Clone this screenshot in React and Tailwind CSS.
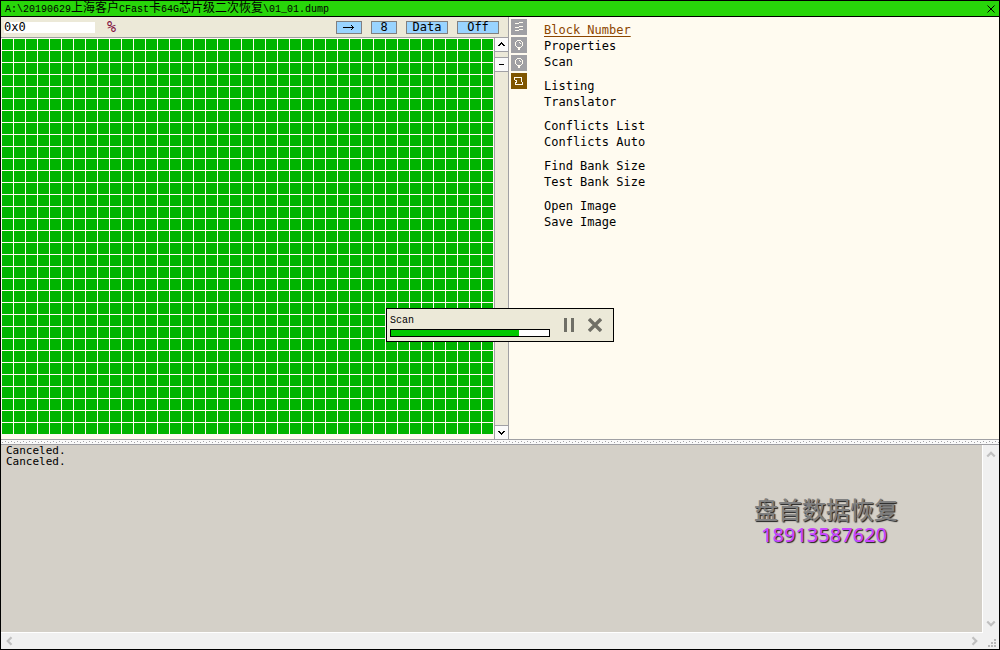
import React from 'react';

const COLS = 41;
const ROWS = 33;
const cells = Array.from({ length: COLS * ROWS }, (_, i) => i);

const menuGroups = [
    ['Block Number', 'Properties', 'Scan'],
    ['Listing', 'Translator'],
    ['Conflicts List', 'Conflicts Auto'],
    ['Find Bank Size', 'Test Bank Size'],
    ['Open Image', 'Save Image'],
];

const log = ['Canceled.', 'Canceled.'];

const Pixel = ({ d, size = 16, width = 1, className }) => (
    <svg width={size} height={size} viewBox={`0 0 ${size} ${size}`} fill="none" stroke="currentColor"
        strokeWidth={width} shapeRendering="crispEdges" className={className} aria-hidden="true">
        <path d={d} />
    </svg>
);

const BULB = 'M6 3.5h4M10 4.5h1M5 4.5h1M4.5 5v4M11.5 5v4M5 9.5h1M10 9.5h1M6 10.5h4M7.5 11v2M8.5 11v2M8 5.5h1M9 6.5h1';
const tools = [
    { name: 'Waves', d: 'M8 3.5h4M4 4.5h4M8 7.5h4M4 8.5h4M8 10.5h4M4 11.5h4' },
    { name: 'Find', d: BULB },
    { name: 'Find next', d: BULB },
    { name: 'Script', d: 'M3 4.5h8M3.5 5v2M4 7.5h1M5.5 7v3M4.5 9v2M4 11.5h8M10.5 5v4M11.5 9v3', active: true },
];

const ToolButton = ({ label, className, children }) => (
    <button aria-label={label}
        className={`flex h-[13px] items-center justify-center border border-[#808080] bg-[#99d4ff] text-[12px] leading-none text-black ${className}`}>
        {children}
    </button>
);

const ScrollArrow = ({ label, d, className }) => (
    <button aria-label={label} className={`flex items-center justify-center text-[#c0c0c0] ${className}`}>
        <svg width="10" height="10" viewBox="0 0 8 8" fill="none" stroke="currentColor" strokeWidth="1.8" aria-hidden="true">
            <path d={d} />
        </svg>
    </button>
);

const TitleBar = () => (
    <header className="flex h-4 shrink-0 items-center justify-between border-b border-black bg-[#28d60a] pl-1 pr-1">
        <h1 className="whitespace-nowrap font-['Liberation_Mono','Noto_Sans_CJK_SC',monospace] text-[10px] leading-none text-black">
            A:\20190629<span className="text-[12px]">上海客户</span>CFast<span className="text-[12px]">卡</span>64G<span className="text-[12px]">芯片级二次恢复</span>\01_01.dump
        </h1>
        <button aria-label="Close" className="text-black">
            <svg width="8" height="8" viewBox="0 0 8 8" stroke="currentColor" strokeWidth="1" aria-hidden="true">
                <path d="M0.5 0.5l7 7M7.5 0.5l-7 7" />
            </svg>
        </button>
    </header>
);

const BlockMap = () => (
    <section className="flex flex-col border-r border-[#a0a0a4]">
        <div className="flex h-[21px] items-center border-b border-[#a0a0a4] bg-[#ece9d8] pl-[3px] pr-[9px]">
            <input aria-label="Offset" defaultValue="0x0"
                className="h-[11px] w-[91px] bg-white text-[12px] leading-none text-black outline-none" />
            <span className="ml-3 text-[15px] leading-none text-[#80103c]">%</span>
            <div className="ml-auto flex gap-[9px]">
                <ToolButton label="Go" className="w-[26px]">
                    <Pixel size={12} d="M0 6.5h11M8 4.5h1M9 5.5h1M9 7.5h1M8 8.5h1" />
                </ToolButton>
                <ToolButton className="w-[26px]">8</ToolButton>
                <ToolButton className="w-[42px]">Data</ToolButton>
                <ToolButton className="w-[42px]">Off</ToolButton>
            </div>
        </div>
        <div className="flex">
            <div className="grid grid-cols-[repeat(41,11px)] auto-rows-[11px] gap-px bg-[#fffbf0] pl-px pr-px pt-px pb-[5px]">
                {cells.map(i => <div key={i} className="bg-[#00b400]" />)}
            </div>
            <div className="flex w-[14px] flex-col border-l border-[#a0a0a4] bg-[#ece9d8] text-black">
                <button aria-label="Scroll up" className="flex h-[14px] items-center justify-center border-b border-[#a0a0a4] bg-[#fafafa]">
                    <Pixel size={7} d="M3 1.5h1M2 2.5h3M1 3.5h2M4 3.5h2M0 4.5h2M5 4.5h2" />
                </button>
                <div className="mt-[5px] flex h-[15px] items-center justify-center border-y border-[#a0a0a4] bg-[#fafafa]">
                    <div className="h-px w-[5px] bg-black" />
                </div>
                <button aria-label="Scroll down" className="mt-auto flex h-[14px] items-center justify-center border-t border-[#a0a0a4] bg-[#fafafa]">
                    <Pixel size={7} d="M0 2.5h2M5 2.5h2M1 3.5h2M4 3.5h2M2 4.5h3M3 5.5h1" />
                </button>
            </div>
        </div>
    </section>
);

const SidePanel = () => (
    <aside className="flex flex-1 bg-[#fffbf0] pl-0.5">
        <div className="flex flex-col gap-0.5 pt-0.5">
            {tools.map(t => (
                <button key={t.name} aria-label={t.name}
                    className={`h-4 w-4 text-[#fffbf0] ${t.active ? 'bg-[#7f5500]' : 'bg-[#a0a0a4]'}`}>
                    <Pixel d={t.d} />
                </button>
            ))}
        </div>
        <nav className="ml-[17px] flex flex-col gap-2 pt-[5px]">
            {menuGroups.map((group, g) => (
                <ul key={g}>
                    {group.map((item, i) => (
                        <li key={item} className="h-4">
                            <button className={`block text-[12px] leading-4 ${g === 0 && i === 0 ? 'text-[#8c4600] underline underline-offset-2' : 'text-black'}`}>
                                {item}
                            </button>
                        </li>
                    ))}
                </ul>
            ))}
        </nav>
    </aside>
);

const Splitter = () => (
    <div className="h-1.5 shrink-0 border-y border-[#a0a0a4] bg-[#fafafa]">
        <svg width="100%" height="4" className="block" shapeRendering="crispEdges" aria-hidden="true">
            <pattern id="grip" width="6" height="4" patternUnits="userSpaceOnUse">
                <path d="M1 2h1v1h-1zM4 1h1v1h-1z" fill="#a0a0a4" />
            </pattern>
            <rect width="100%" height="4" fill="url(#grip)" />
        </svg>
    </div>
);

const LogPanel = () => (
    <section className="relative flex flex-1 flex-col bg-[#f0f0f0]">
        <div className="flex flex-1">
            <div role="log" className="flex-1 border-b border-r border-white bg-[#d4d0c8] pl-[5px] text-[11px] leading-[11px] text-black">
                {log.map((line, i) => <p key={i}>{line}</p>)}
            </div>
            <div className="flex w-4 flex-col justify-between">
                <ScrollArrow label="Scroll log up" className="h-[18px]" d="M1 6l3-3 3 3" />
                <ScrollArrow label="Scroll log down" className="h-[18px]" d="M1 2l3 3 3-3" />
            </div>
        </div>
        <div className="flex h-4">
            <ScrollArrow label="Scroll log left" className="w-4" d="M6 1l-3 3 3 3" />
            <ScrollArrow label="Scroll log right" className="ml-auto w-4" d="M2 1l3 3-3 3" />
            <svg width="16" height="16" fill="#b8b8b8" shapeRendering="crispEdges" aria-hidden="true">
                <path d="M11 6h2v2h-2zM8 9h2v2h-2zM11 9h2v2h-2zM5 12h2v2h-2zM8 12h2v2h-2zM11 12h2v2h-2z" />
            </svg>
        </div>
        <div className="absolute right-[101px] top-[52px] text-center font-['Noto_Sans','Noto_Sans_CJK_SC',sans-serif] [text-shadow:1px_1px_1px_#202020]">
            <p className="text-[24px] leading-[26px] font-medium text-[#808080]">盘首数据恢复</p>
            <p className="pr-1 text-[20px] leading-[24px] font-medium text-[#c846ff]">18913587620</p>
        </div>
    </section>
);

const ScanDialog = () => (
    <div role="dialog" aria-label="Scan"
        className="absolute inset-0 m-auto flex h-[34px] w-[228px] items-center border border-black bg-[#ece9d8] pl-[3px] pr-[11px]">
        <div>
            <p className="pt-1 font-['Liberation_Mono',monospace] text-[10px] leading-3 text-black">Scan</p>
            <div role="progressbar" aria-label="Scan progress" aria-valuenow={81}
                className="mb-0.5 mt-0.5 h-2 w-40 border border-black bg-white">
                <div className="h-full bg-[#00c800]" style={{ width: '81%' }} />
            </div>
        </div>
        <button aria-label="Pause" className="ml-auto text-[#706f66]">
            <svg width="10" height="14" fill="currentColor" shapeRendering="crispEdges" aria-hidden="true">
                <path d="M0 0h3v14h-3zM7 0h3v14h-3z" />
            </svg>
        </button>
        <button aria-label="Cancel" className="ml-[14px] text-[#706f66]">
            <svg width="14" height="14" viewBox="0 0 14 14" stroke="currentColor" strokeWidth="3.4" aria-hidden="true">
                <path d="M1 1l12 12M13 1l-12 12" />
            </svg>
        </button>
    </div>
);

const App = () => (
    <div className="relative flex h-screen w-full flex-col overflow-hidden border border-black bg-[#fffbf0] font-['DejaVu_Sans_Mono',monospace]">
        <TitleBar />
        <main className="flex">
            <BlockMap />
            <SidePanel />
        </main>
        <Splitter />
        <LogPanel />
        <ScanDialog />
    </div>
);

export default App;
